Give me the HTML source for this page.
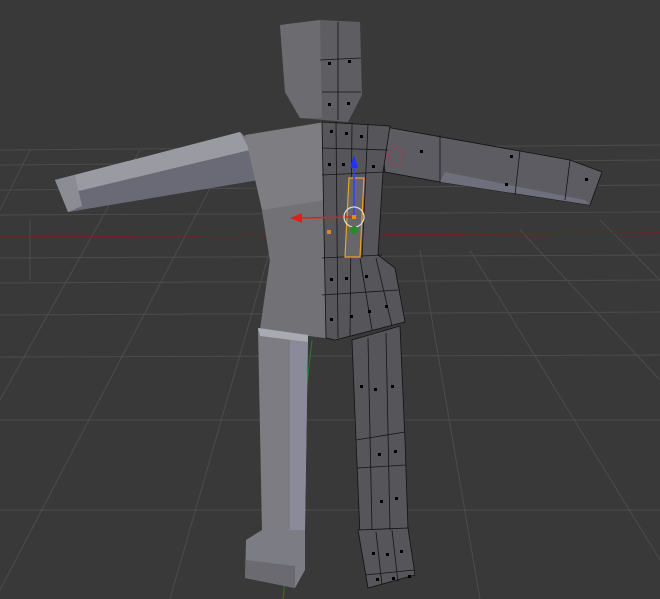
<!DOCTYPE html>
<html><head><style>html,body{margin:0;padding:0;background:#3a3a3a;overflow:hidden}svg{display:block}</style></head><body>
<svg width="660" height="599" viewBox="0 0 660 599" xmlns="http://www.w3.org/2000/svg">
<rect width="660" height="599" fill="#393939"/>
<g stroke="#4c4c4c" stroke-width="1" fill="none">
<line x1="0" y1="165" x2="660" y2="160"/><line x1="0" y1="190" x2="660" y2="185"/>
<line x1="0" y1="215" x2="660" y2="212"/><line x1="0" y1="258" x2="660" y2="255"/>
<line x1="0" y1="283" x2="660" y2="280"/><line x1="0" y1="315" x2="660" y2="312"/>
<line x1="0" y1="357" x2="660" y2="355"/><line x1="0" y1="420" x2="660" y2="420"/>
<line x1="0" y1="510" x2="660" y2="510"/>
<line x1="0" y1="150" x2="660" y2="145"/>
<line x1="30" y1="150" x2="0" y2="210"/><line x1="140" y1="150" x2="0" y2="400"/>
<line x1="230" y1="150" x2="0" y2="590"/><line x1="270" y1="250" x2="170" y2="599"/>
<line x1="420" y1="250" x2="480" y2="599"/><line x1="470" y1="250" x2="660" y2="560"/>
<line x1="520" y1="230" x2="660" y2="380"/><line x1="600" y1="220" x2="660" y2="280"/>
<line x1="30" y1="220" x2="30" y2="280"/>
</g>
<line x1="0" y1="237" x2="660" y2="233" stroke="#7a2020" stroke-width="1"/>
<line x1="312" y1="340" x2="283" y2="599" stroke="#2a7a2a" stroke-width="1"/>
<!-- left arm -->
<polygon points="55,180 240,132 262,152 258,180 68,212" fill="#7c7c84"/>
<polygon points="55,180 240,132 250,150 62,195" fill="#9a9aa2"/>
<polygon points="62,195 250,150 258,180 68,212" fill="#6a6a76"/>
<polygon points="55,180 75,175 82,206 68,212" fill="#8c8c94"/>
<!-- head -->
<polygon points="280,25 320,20 360,22 362,95 348,122 300,118 285,92" fill="#5e5e62"/>
<polygon points="280,25 320,20 322,118 300,118 285,92" fill="#6c6c70"/>
<!-- torso left -->
<polygon points="245,135 325,122 326,338 260,330 270,260 262,210" fill="#7e7e82"/>
<polygon points="262,210 325,200 326,338 260,330 270,260" fill="#727276"/>
<!-- right arm -->
<polygon points="380,126 570,160 602,172 590,205 440,182 385,172" fill="#5c5c62" stroke="#111" stroke-width="0.8"/>
<polygon points="440,182 590,205 585,200 445,172" fill="#6e6e7c"/>
<!-- torso right -->
<polygon points="322,122 390,126 383,172 378,255 395,268 405,322 335,340 326,338" fill="#56565a" stroke="#111" stroke-width="0.8"/>
<g stroke="#151515" stroke-width="0.8">
<line x1="322" y1="148" x2="388" y2="150"/><line x1="322" y1="175" x2="385" y2="172"/>
<line x1="322" y1="258" x2="382" y2="255"/><line x1="322" y1="295" x2="398" y2="290"/>
<line x1="336" y1="122" x2="338" y2="338"/><line x1="352" y1="123" x2="350" y2="336"/>
<line x1="368" y1="124" x2="362" y2="258"/><line x1="376" y1="258" x2="392" y2="326"/>
<line x1="360" y1="258" x2="372" y2="330"/><line x1="338" y1="22" x2="338" y2="120"/>
<line x1="320" y1="60" x2="361" y2="58"/><line x1="322" y1="92" x2="361" y2="92"/>
<line x1="440" y1="135" x2="440" y2="182"/><line x1="520" y1="150" x2="515" y2="195"/>
<line x1="570" y1="160" x2="565" y2="200"/>
</g>
<!-- left leg -->
<polygon points="258,328 308,335 305,530 262,532" fill="#7c7c82"/>
<polygon points="290,335 308,335 305,530 290,530" fill="#8a8a9a"/>
<polygon points="258,328 308,335 308,342 260,336" fill="#aaaab2"/>
<polygon points="246,540 262,530 305,530 305,570 295,588 245,578" fill="#7c7c84"/>
<polygon points="246,560 295,566 295,588 245,578" fill="#6a6a70"/>
<!-- right leg -->
<polygon points="352,340 400,326 405,440 408,530 360,535 356,440" fill="#55555a" stroke="#111" stroke-width="0.8"/>
<polygon points="358,530 408,528 415,575 368,588" fill="#55555a" stroke="#111" stroke-width="0.8"/>
<g stroke="#151515" stroke-width="0.8">
<line x1="368" y1="338" x2="372" y2="530"/><line x1="386" y1="333" x2="390" y2="530"/>
<line x1="356" y1="440" x2="405" y2="432"/><line x1="357" y1="468" x2="406" y2="465"/>
<line x1="365" y1="575" x2="414" y2="570"/><line x1="376" y1="532" x2="382" y2="585"/>
<line x1="392" y1="530" x2="398" y2="582"/>
</g>
<g fill="#000">
<rect x="330" y="130" width="3" height="3"/><rect x="345" y="132" width="3" height="3"/><rect x="360" y="135" width="3" height="3"/>
<rect x="328" y="163" width="3" height="3"/><rect x="342" y="163" width="3" height="3"/><rect x="372" y="165" width="3" height="3"/>
<rect x="328" y="62" width="3" height="3"/><rect x="348" y="60" width="3" height="3"/><rect x="328" y="103" width="3" height="3"/><rect x="347" y="102" width="3" height="3"/>
<rect x="330" y="278" width="3" height="3"/><rect x="345" y="277" width="3" height="3"/><rect x="365" y="275" width="3" height="3"/>
<rect x="330" y="318" width="3" height="3"/><rect x="350" y="315" width="3" height="3"/><rect x="368" y="310" width="3" height="3"/><rect x="385" y="305" width="3" height="3"/>
<rect x="420" y="150" width="3" height="3"/><rect x="510" y="155" width="3" height="3"/><rect x="505" y="183" width="3" height="3"/><rect x="585" y="178" width="3" height="3"/>
<rect x="360" y="385" width="3" height="3"/><rect x="374" y="388" width="3" height="3"/><rect x="391" y="385" width="3" height="3"/>
<rect x="378" y="453" width="3" height="3"/><rect x="394" y="450" width="3" height="3"/><rect x="380" y="500" width="3" height="3"/><rect x="395" y="497" width="3" height="3"/>
<rect x="372" y="552" width="3" height="3"/><rect x="386" y="553" width="3" height="3"/><rect x="400" y="550" width="3" height="3"/>
<rect x="376" y="578" width="3" height="3"/><rect x="392" y="577" width="3" height="3"/><rect x="408" y="575" width="3" height="3"/>
</g>
<!-- selected bone & gizmo -->
<polygon points="349,178 364,178 360,257 345,257" fill="#66666c" stroke="#f0a020" stroke-width="1.2"/>
<line x1="354" y1="217" x2="354" y2="163" stroke="#3040ff" stroke-width="1.5"/>
<polygon points="350,168 354,155 358,168" fill="#2030ff"/>
<line x1="354" y1="217" x2="300" y2="218" stroke="#e02020" stroke-width="1.5"/>
<polygon points="290,218 302,213 302,223" fill="#e02020"/>
<circle cx="354" cy="217" r="10" fill="none" stroke="#ddd" stroke-width="1.2"/>
<rect x="352" y="215" width="4" height="4" fill="#f08a00"/>
<circle cx="354" cy="230" r="4" fill="#2a8a2a"/>
<rect x="327" y="230" width="4" height="4" fill="#d08a30"/>
<circle cx="396" cy="157" r="8" fill="none" stroke="#c03030" stroke-width="1" stroke-dasharray="3,2"/>
</svg>
</body></html>
